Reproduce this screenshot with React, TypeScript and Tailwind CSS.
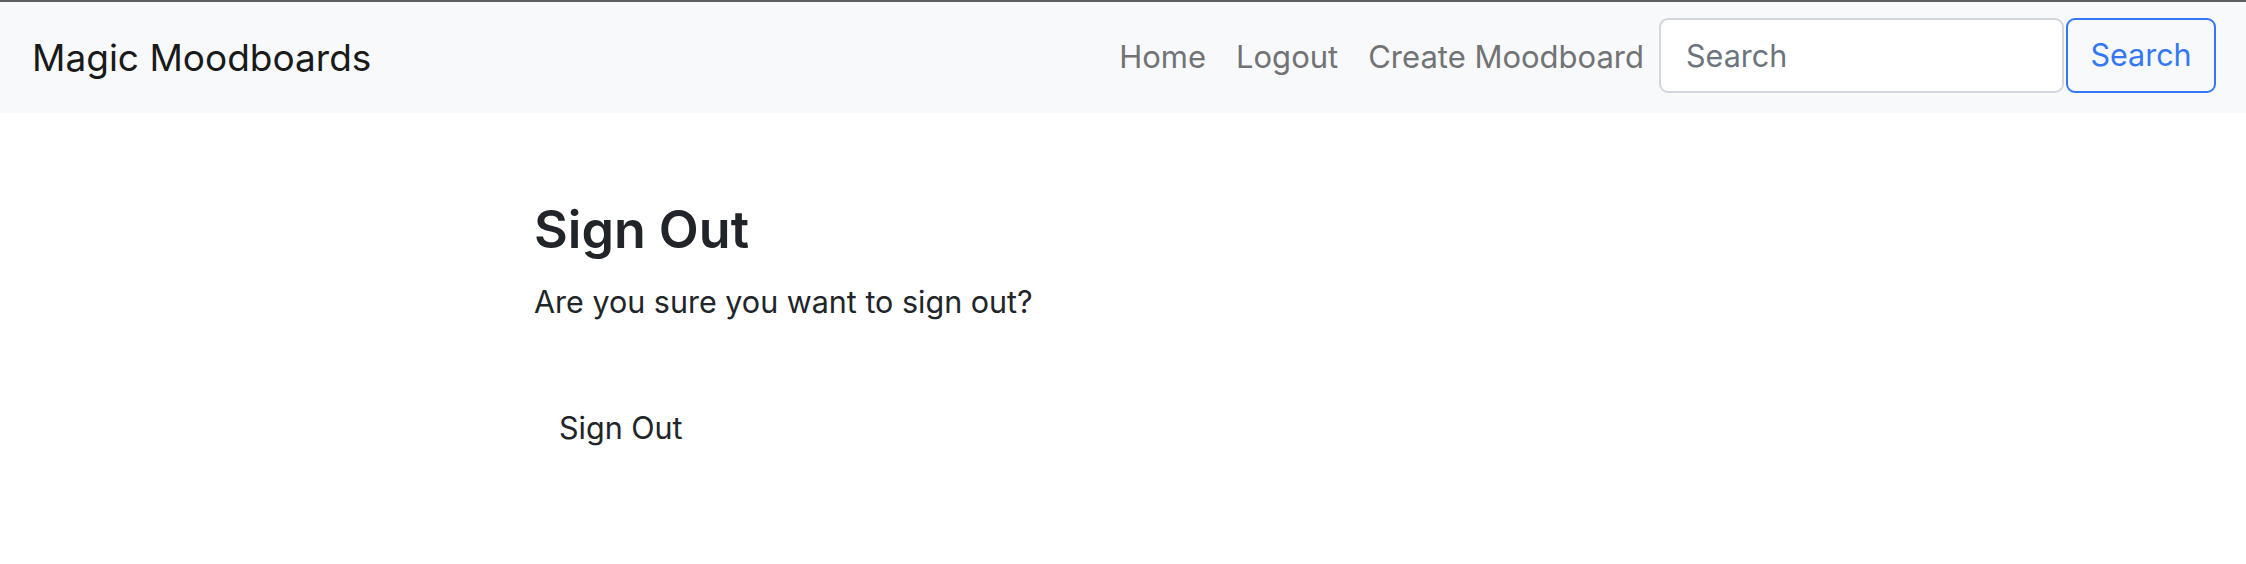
import React from "react";

export default function App() {
  return (
    <div className="min-h-[564px] w-full bg-white text-[#212529]" style={{ fontFamily: "Inter, 'Noto Sans', sans-serif" }}>
      <div className="h-[2px] w-full bg-[#5e5f61]" />
      <nav className="flex h-[111px] items-center justify-between bg-[#f8f9fa] pl-[32px] pr-[30px]">
        <a className="text-[37px] leading-[1.5] text-[#1a1a1a]">Magic Moodboards</a>
        <div className="flex items-center">
          <ul className="flex items-center">
            <li className="px-[15px] text-[31px] leading-[1.5] text-[#727374]">Home</li>
            <li className="px-[15px] text-[31px] leading-[1.5] text-[#727374]">Logout</li>
            <li className="px-[15px] text-[31px] leading-[1.5] text-[#727374]">Create Moodboard</li>
          </ul>
          <form className="mb-[5px] flex items-center gap-[2px]">
            <input
              placeholder="Search"
              className="h-[75px] w-[405px] rounded-[9px] border-2 border-[#d3d6da] bg-white pl-[25px] text-[30.5px] text-[#212529] outline-none placeholder:text-[#6c757d]"
            />
            <button
              type="button"
              className="h-[75px] w-[150px] rounded-[9px] border-2 border-[#3478f6] text-[30.5px] text-[#3478f6]"
            >
              Search
            </button>
          </form>
        </div>
      </nav>
      <main className="pl-[534px] pt-[86px]">
        <h2 className="text-[52px] font-semibold leading-[1.2]">Sign Out</h2>
        <p className="mt-[18px] text-[30.5px] leading-[1.5]">Are you sure you want to sign out?</p>
        <button
          type="button"
          className="mt-[71px] rounded-[9px] border-2 border-transparent px-[23px] py-[7px] text-[30.5px] leading-[1.5] text-[#212529]"
        >
          Sign Out
        </button>
      </main>
    </div>
  );
}
